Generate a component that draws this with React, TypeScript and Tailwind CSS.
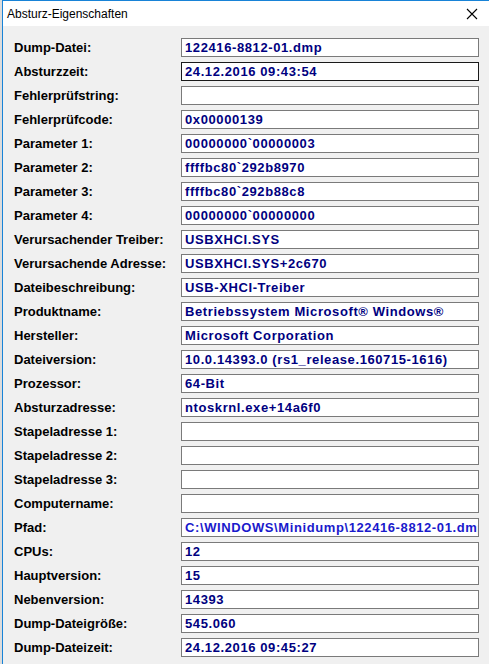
const rows: [string, string][] = [
  ['Dump-Datei:', '122416-8812-01.dmp'],
  ['Absturzzeit:', '24.12.2016 09:43:54'],
  ['Fehlerprüfstring:', ''],
  ['Fehlerprüfcode:', '0x00000139'],
  ['Parameter 1:', '00000000`00000003'],
  ['Parameter 2:', 'ffffbc80`292b8970'],
  ['Parameter 3:', 'ffffbc80`292b88c8'],
  ['Parameter 4:', '00000000`00000000'],
  ['Verursachender Treiber:', 'USBXHCI.SYS'],
  ['Verursachende Adresse:', 'USBXHCI.SYS+2c670'],
  ['Dateibeschreibung:', 'USB-XHCI-Treiber'],
  ['Produktname:', 'Betriebssystem Microsoft® Windows®'],
  ['Hersteller:', 'Microsoft Corporation'],
  ['Dateiversion:', '10.0.14393.0 (rs1_release.160715-1616)'],
  ['Prozessor:', '64-Bit'],
  ['Absturzadresse:', 'ntoskrnl.exe+14a6f0'],
  ['Stapeladresse 1:', ''],
  ['Stapeladresse 2:', ''],
  ['Stapeladresse 3:', ''],
  ['Computername:', ''],
  ['Pfad:', 'C:\\WINDOWS\\Minidump\\122416-8812-01.dmp'],
  ['CPUs:', '12'],
  ['Hauptversion:', '15'],
  ['Nebenversion:', '14393'],
  ['Dump-Dateigröße:', '545.060'],
  ['Dump-Dateizeit:', '24.12.2016 09:45:27'],
];

function Field({ value, focused, link }: { value: string; focused?: boolean; link?: boolean }) {
  return (
    <div
      className={
        'h-[19px] w-[298px] overflow-hidden whitespace-nowrap border bg-white pl-[3px] text-[13px] leading-[17px] font-bold tracking-[0.6px] ' +
        (focused ? 'border-[#1a1a1a] ' : 'border-[#7a7a7a] ') +
        (link ? 'text-[#1a1acc]' : 'text-[#000080]')
      }
    >
      {value}
    </div>
  );
}

export default function App() {
  return (
    <div className="flex h-[664px] w-[489px] overflow-hidden bg-[#e9e9e9] font-['Liberation_Sans',Arial,sans-serif]">
      <div className="w-[2px] shrink-0 bg-[#dcdcdc]" />
      <div className="flex flex-1 flex-col border-t border-l border-[#1883d7] bg-[#f0f0f0]">
        <div className="flex h-[25px] shrink-0 items-center justify-between bg-white pl-[4px] pr-[10px] text-[12px] text-black">
          <span>Absturz-Eigenschaften</span>
          <svg width="12" height="12" viewBox="0 0 12 12" className="mr-[1px]">
            <path d="M1 1 L11 11 M11 1 L1 11" stroke="#000" strokeWidth="1.1" fill="none" />
          </svg>
        </div>
        <div className="flex flex-col gap-[5px] pt-[12px] pl-[11px]">
          {rows.map(([label, value], i) => (
            <div key={label} className="flex items-center">
              <div className="w-[167px] text-[13px] leading-[17px] font-bold text-black">{label}</div>
              <Field value={value} focused={i === 1} link={label === 'Pfad:'} />
            </div>
          ))}
        </div>
      </div>
    </div>
  );
}
